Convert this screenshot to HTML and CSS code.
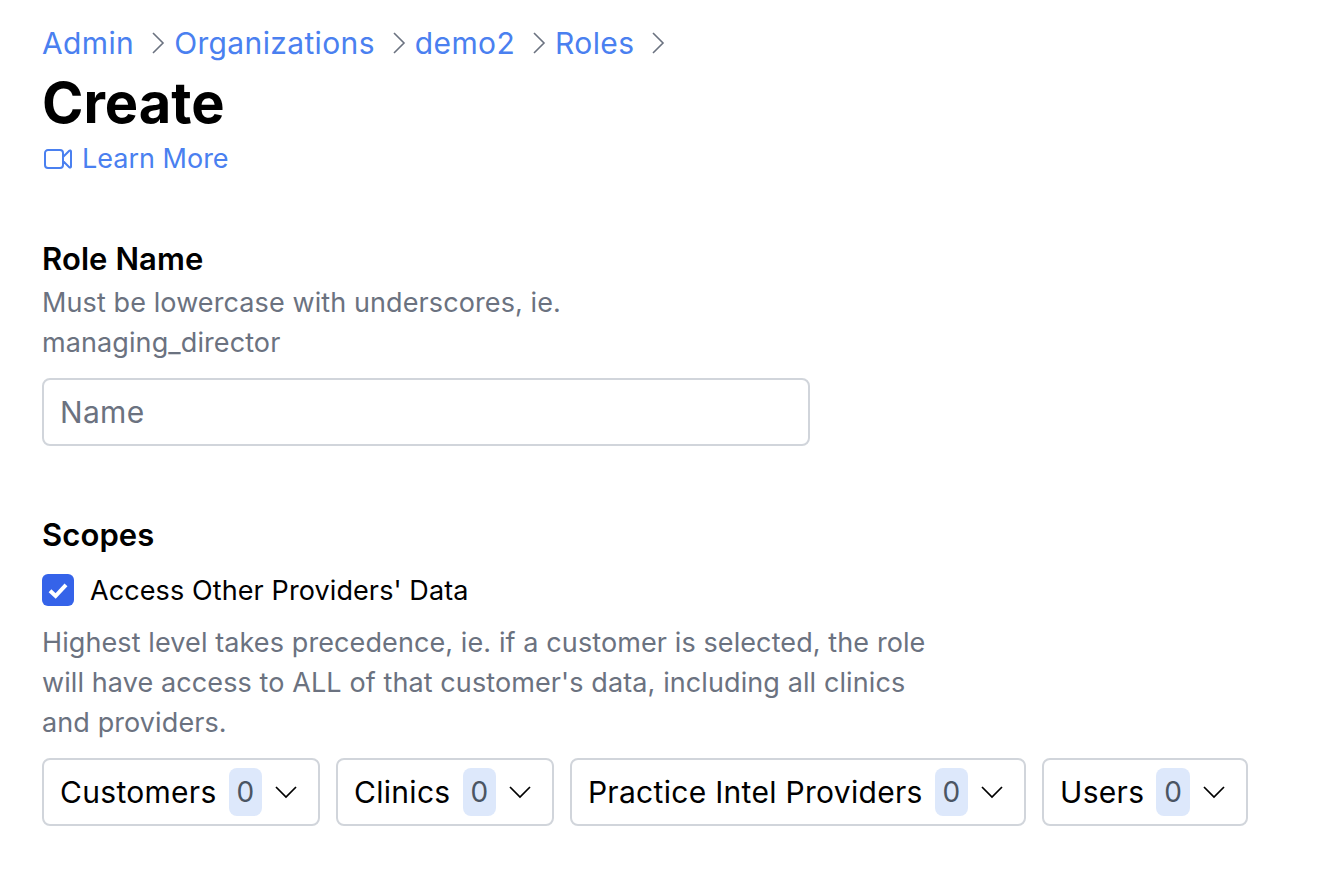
FILE: index.html
```html
<!DOCTYPE html>
<html lang="en">
<head>
<meta charset="utf-8">
<title>Create</title>
<link rel="stylesheet" href="styles.css">
</head>
<body>
<main class="page">
  <nav class="crumbs">
    <a class="crumb">Admin</a>
    <svg class="chev" viewBox="0 0 24 24"><path d="M8.25 4.5 15.75 12l-7.5 7.5"/></svg>
    <a class="crumb">Organizations</a>
    <svg class="chev" viewBox="0 0 24 24"><path d="M8.25 4.5 15.75 12l-7.5 7.5"/></svg>
    <a class="crumb">demo2</a>
    <svg class="chev" viewBox="0 0 24 24"><path d="M8.25 4.5 15.75 12l-7.5 7.5"/></svg>
    <a class="crumb">Roles</a>
    <svg class="chev" viewBox="0 0 24 24"><path d="M8.25 4.5 15.75 12l-7.5 7.5"/></svg>
  </nav>
  <h1 class="title">Create</h1>
  <a class="learn">
    <svg class="video" viewBox="0 0 24 24"><path d="m15.75 10.5 4.72-4.72a.75.75 0 0 1 1.28.53v11.38a.75.75 0 0 1-1.28.53l-4.72-4.72M4.5 18.75h9a2.25 2.25 0 0 0 2.25-2.25v-9a2.25 2.25 0 0 0-2.25-2.25h-9A2.25 2.25 0 0 0 2.25 7.5v9a2.25 2.25 0 0 0 2.25 2.25Z"/></svg>
    Learn More
  </a>
  <section class="role">
    <h2 class="label">Role Name</h2>
    <p class="help narrow">Must be lowercase with underscores, ie. managing_director</p>
    <input class="name" type="text" placeholder="Name">
  </section>
  <section class="scopes">
    <h2 class="label">Scopes</h2>
    <label class="check">
      <span class="box"><svg viewBox="0 0 16 16"><path d="M4 8.4 6.8 11 12 5.4"/></svg></span>
      Access Other Providers' Data
    </label>
    <p class="help wide">Highest level takes precedence, ie. if a customer is selected, the role will have access to ALL of that customer's data, including all clinics and providers.</p>
    <div class="filters">
      <button class="filter">Customers <span class="count">0</span><svg class="down" viewBox="0 0 24 24"><path d="m4.5 8.25 7.5 7.5 7.5-7.5"/></svg></button>
      <button class="filter">Clinics <span class="count">0</span><svg class="down" viewBox="0 0 24 24"><path d="m4.5 8.25 7.5 7.5 7.5-7.5"/></svg></button>
      <button class="filter">Practice Intel Providers <span class="count">0</span><svg class="down" viewBox="0 0 24 24"><path d="m4.5 8.25 7.5 7.5 7.5-7.5"/></svg></button>
      <button class="filter">Users <span class="count">0</span><svg class="down" viewBox="0 0 24 24"><path d="m4.5 8.25 7.5 7.5 7.5-7.5"/></svg></button>
    </div>
  </section>
</main>
</body>
</html>
```
FILE: styles.css
```css
* { box-sizing: border-box; }
html, body { margin: 0; padding: 0; background: #fff; }
body { font-family: Inter, "Liberation Sans", sans-serif; color: #000; }
.page { padding: 22px 42px 0; }
.crumbs { display: flex; align-items: center; height: 42px; }
.crumb { color: #4a80f0; font-size: 30px; letter-spacing: .36px; }
.chev { width: 32px; height: 32px; margin: 0 0 0 8px; fill: none; stroke: #6b7280; stroke-width: 1.2; }
.title { margin: 3px 0 0; font-size: 56px; line-height: 72px; font-weight: 700; }
.learn { display: flex; align-items: center; color: #4a80f0; font-size: 27px; line-height: 40px; gap: 8px; }
.video { width: 32px; height: 32px; fill: none; stroke: #4a80f0; stroke-width: 1.5; }
.label { margin: 0; font-size: 31px; line-height: 40px; font-weight: 600; letter-spacing: .1px; }
.role { margin-top: 60px; }
.help { margin: 4px 0 0; color: #6b7280; font-size: 27px; line-height: 40px; letter-spacing: .1px; }
.narrow { width: 540px; }
.wide { width: 900px; margin-top: 12px; }
.name { display: block; width: 768px; height: 68px; margin-top: 15px; padding: 0 16px 0; border: 2px solid #d1d5db; border-radius: 8px; font: 30px Inter, sans-serif; letter-spacing: .33px; }
.name::placeholder { color: #6b7280; }
.scopes { margin-top: 69px; }
.check { display: flex; align-items: center; gap: 16px; margin-top: 16px; font-size: 27px; line-height: 40px; letter-spacing: .1px; }
.box { width: 32px; height: 32px; margin-bottom: 2px; border-radius: 6px; background: #3563e9; display: flex; }
.box svg { fill: none; stroke: #fff; stroke-width: 2; }
.filters { display: flex; gap: 16px; margin-top: 15px; }
.filter { display: flex; align-items: center; height: 68px; padding: 0 16px; border: 2px solid #d1d5db; border-radius: 8px; background: #fff; font: 30px Inter, sans-serif; letter-spacing: .3px; color: #000; }
.count { margin-left: 12px; background: #dde8fb; color: #4b5563; border-radius: 8px; width: 33.4px; text-align: center; font-size: 28px; line-height: 48px; letter-spacing: 0; }
.down { width: 32px; height: 32px; margin-left: 8px; fill: none; stroke: #000; stroke-width: 1.3; }
```
